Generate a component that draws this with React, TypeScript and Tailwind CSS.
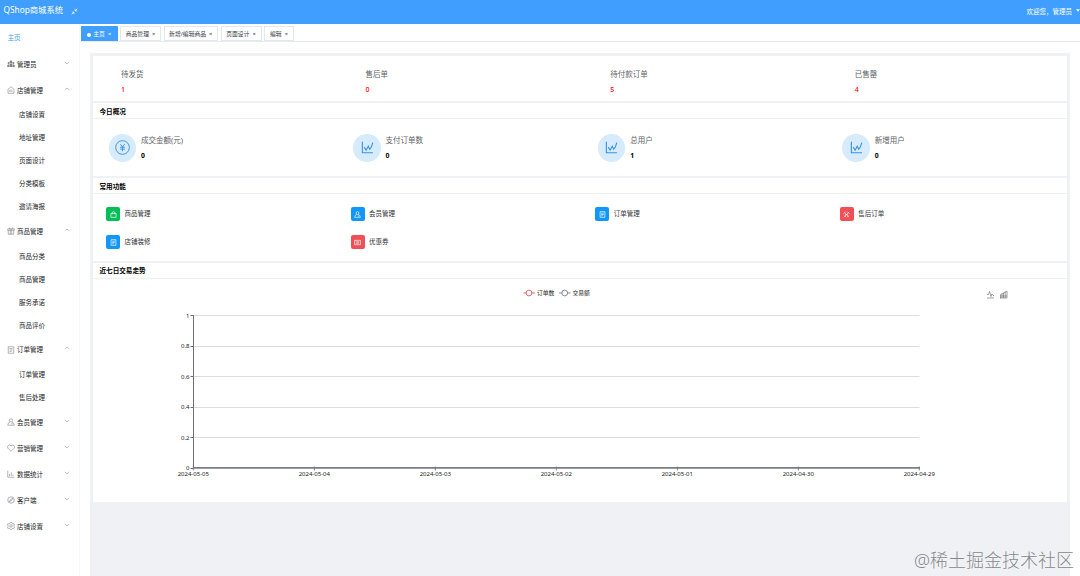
import React from 'react';

type IconName =
  | 'users' | 'shop' | 'gift' | 'doc' | 'user' | 'heart' | 'chart' | 'compass' | 'gear'
  | 'bag' | 'tools' | 'ticket' | 'yen' | 'trend';

const shapes: Record<IconName, React.ReactNode> = {
  users: (
    <g fill="currentColor" stroke="none">
      <circle cx="8" cy="4" r="2.8" />
      <circle cx="3.2" cy="6" r="2" />
      <circle cx="12.8" cy="6" r="2" />
      <path d="M5 14V9.5Q5 7 8 7t3 2.5V14zM.5 14v-3q0-2.500 3.700-2V14zM15.500 14v-3q0-2.500-3.700-2V14z" />
    </g>
  ),
  shop: <path d="M2 6.5 8 1.5l6 5V14.500H2zM5.500 11.500v-3.500M8 11.500V6.500M10.500 11.500v-2.500" />,
  gift: <path d="M1.500 3.500h13v3h-13zM2.500 6.500v8h11v-8M6.500 3.500v11M9.500 3.500v11M5 1v2.500M11 1v2.500" />,
  doc: <path d="M2.500 1.500h11v13h-11zM5 5h6M5 8h6M5 11h4" />,
  user: <path d="M8 1.500a3.300 3.300 0 1 1 0 6.600a3.300 3.300 0 1 1 0-6.600M1.500 14.500q0-5 4.500-6.500M10 8q4.500 1.500 4.500 6.500H1.500M8.500 11.500h3" />,
  heart: <path d="M8 14.500 2 8.500Q0 5.500 2.200 3T8 3.800Q11 .8 13.800 3T14 8.500z" />,
  chart: <path d="M1.500 1.500v13h13M5 12V8M8.500 12V5M12 12V9" />,
  compass: <path d="M8 1.500a6.500 6.500 0 1 1 0 13a6.500 6.500 0 1 1 0-13M11.500 4.500 9 9l-4.500 2.500L7 7z" />,
  gear: (
    <path d="M6.500 1h3l.6 2 2 .9 2-.6 1.200 2.600-1.500 1.500v1.400l1.500 1.500-1.200 2.600-2-.6-2 .9-.6 2h-3l-.6-2-2-.9-2 .6L.7 10.300l1.500-1.500V7.400L.7 5.900l1.200-2.600 2 .6 2-.9zM8 5.500a2.500 2.500 0 1 1 0 5a2.500 2.500 0 1 1 0-5" />
  ),
  bag: <path d="M2 5.500h12v9H2zM5 7.500V4q0-2.500 3-2.500T11 4v3.500" />,
  tools: <path d="M3 3 13.500 14M13 3 2.500 14M1 6.500 6 1.500M10 1.500l5 5M3 10.500l3.500 3.500M13 10.500 9.500 14M5 8.300h6" />,
  ticket: <path d="M1 3h14v10H1zM4 6.500h8M4 9.500h8" />,
  yen: (
    <g>
      <circle cx="8" cy="8" r="7.300" />
      <path d="M5.800 4.500 8 7.500l2.200-3M8 7.500V12M5.500 7.700h5M5.500 9.700h5" />
    </g>
  ),
  trend: <path d="M1.700 1v13.500h13M4 7.500l2.300 3.800L9 6.500l1.700 3.500 2-2.500L14.500 2" />,
};

function Icon({ name, className, width = 1 }: { name: IconName; className: string; width?: number }) {
  return (
    <svg viewBox="0 0 16 16" className={className} fill="none" stroke="currentColor" strokeWidth={width}>
      {shapes[name]}
    </svg>
  );
}

type MenuEntry = { label: string; icon: IconName; children?: string[] };

const menu: MenuEntry[] = [
  { label: '管理员', icon: 'users' },
  { label: '店铺管理', icon: 'shop', children: ['店铺设置', '地址管理', '页面设计', '分类模板', '邀请海报'] },
  { label: '商品管理', icon: 'gift', children: ['商品分类', '商品管理', '服务承诺', '商品评价'] },
  { label: '订单管理', icon: 'doc', children: ['订单管理', '售后处理'] },
  { label: '会员管理', icon: 'user' },
  { label: '营销管理', icon: 'heart' },
  { label: '数据统计', icon: 'chart' },
  { label: '客户端', icon: 'compass' },
  { label: '店铺设置', icon: 'gear' },
];

function Sidebar() {
  return (
    <nav className="w-[80px] shrink-0 border-r border-[#f8f8fa] pt-[1.500px] text-[6.500px] text-[#232529]">
      <div className="flex h-[26px] items-center pl-[7.500px] text-[#409eff]">主页</div>
      {menu.map((m) => (
        <div key={m.label + m.icon}>
          <div className="flex h-[26px] items-center pl-[7px] pr-[9.500px]">
            <Icon name={m.icon} className="mr-[2px] mb-px size-[8px] text-[#80838a]" width={1.200} />
            <span className="flex-1 pt-[.8px]">{m.label}</span>
            <svg viewBox="0 0 6 4" className="mb-[4px] h-[4px] w-[6px]" fill="none" stroke="#909399" strokeWidth=".6">
              <path d={m.children ? 'M.8 2.800 3 1l2.200 1.800' : 'M.8 1 3 2.800 5.200 1'} />
            </svg>
          </div>
          {m.children?.map((c) => (
            <div key={c} className="flex h-[23.100px] items-center pt-[.5px] pl-[19px]">{c}</div>
          ))}
        </div>
      ))}
    </nav>
  );
}

function TabItem({ label, size }: { label: string; size: string }) {
  return (
    <div className={'flex h-[15.500px] shrink-0 items-center justify-center gap-[2px] border border-[#e2e8f0] bg-white pt-[2.500px] text-[#363c45] ' + size}>
      <span>{label}</span>
      <span className="pl-px">×</span>
    </div>
  );
}

function Tabs() {
  return (
    <div className="flex h-[18px] shrink-0 items-end gap-[2.500px] border-b border-[#e8eaee] pl-[1px] text-[5.800px]">
      <div className="flex h-[15.500px] w-[36.500px] shrink-0 items-center justify-center gap-[2px] bg-[#409eff] pt-[2.500px] text-white">
        <i className="size-[4px] rounded-full bg-white" />
        <span>主页</span>
        <span className="pl-px">×</span>
      </div>
      <TabItem label="商品管理" size="w-[41px]" />
      <TabItem label="新增/编辑商品" size="w-[54.500px]" />
      <TabItem label="页面设计" size="w-[41px]" />
      <TabItem label="编辑" size="w-[30px]" />
    </div>
  );
}

function CardTitle({ children }: { children: React.ReactNode }) {
  return (
    <h2 className="flex h-[16px] items-center border-b border-[#eef0f3] pt-[3.500px] pl-[6.500px] text-[6.600px] font-bold text-black">
      {children}
    </h2>
  );
}

const orders = [['待发货', '1'], ['售后单', '0'], ['待付款订单', '5'], ['已售罄', '4']];
const today: [string, string, IconName][] = [
  ['成交金额(元)', '0', 'yen'],
  ['支付订单数', '0', 'trend'],
  ['总用户', '1', 'trend'],
  ['新增用户', '0', 'trend'],
];
const tools: { label: string; icon: IconName; color: string }[] = [
  { label: '商品管理', icon: 'bag', color: 'bg-[#07bd58]' },
  { label: '会员管理', icon: 'user', color: 'bg-[#1296f8]' },
  { label: '订单管理', icon: 'doc', color: 'bg-[#1296f8]' },
  { label: '售后订单', icon: 'tools', color: 'bg-[#f04f55]' },
  { label: '店铺装修', icon: 'doc', color: 'bg-[#1296f8]' },
  { label: '优惠券', icon: 'ticket', color: 'bg-[#f04f55]' },
];
const dates = ['2024-05-05', '2024-05-04', '2024-05-03', '2024-05-02', '2024-05-01', '2024-04-30', '2024-04-29'];
const levels = ['1', '0.8', '0.6', '0.4', '0.2', '0'];

function TrendChart() {
  return (
    <svg width="974" height="223" viewBox="93 279 974 223" className="block" fontSize="6">
      <g fill="#fff" strokeWidth=".7">
        <path d="M523.500 293h11.500" stroke="#c23531" />
        <circle cx="529" cy="293" r="2.900" stroke="#c23531" />
        <path d="M559 293h11.500" stroke="#4f5b66" />
        <circle cx="564.700" cy="293" r="2.900" stroke="#4f5b66" />
      </g>
      <g fill="#222" fontSize="5.800">
        <text x="537" y="295">订单数</text>
        <text x="572.500" y="295">交易额</text>
      </g>
      <g fill="none" stroke="#777" strokeWidth=".7">
        <path d="M987 298h7M987 294.500h1.500l1-3 1.500 5 1-2.500 1 1.500h1" />
        <path d="M1000 298h7v-7l-6.500 3.500V298zM1002 294v4M1003.500 293v5M1005.200 292v6M1000.500 296h6.500" />
      </g>
      {levels.map((v, i) => {
        const y = 315.5 + i * 30.5;
        return (
          <g key={v}>
            {i < 5 && <path d={`M193 ${Math.floor(y) + 0.5}H919.500`} stroke="#dcdfe2" />}
            <path d={`M190.500 ${Math.floor(y) + 0.5}h3`} stroke="#6e7079" />
            <text x="189.500" y={y + 2} textAnchor="end" fill="#222">{v}</text>
          </g>
        );
      })}
      <path d="M193.500 315v153" stroke="#6e7079" />
      <path d="M193 467.900h727" stroke="#7b7e87" strokeWidth="1.700" />
      {dates.map((d, i) => (
        <g key={d}>
          <path d={`M${193.3 + i * 121} 466.500v4`} stroke="#6e7079" strokeWidth=".8" />
          <text x={193.3 + i * 121} y="476.400" textAnchor="middle" fill="#222">{d}</text>
        </g>
      ))}
    </svg>
  );
}

export default function App() {
  return (
    <div className="relative flex h-[576px] w-[1080px] flex-col overflow-hidden bg-white font-['Noto_Sans','Noto_Sans_CJK_SC',sans-serif] leading-none whitespace-nowrap">
      <header className="flex h-[24px] shrink-0 items-center bg-[#409eff] pb-[3px] pl-[3.500px] text-white">
        <span className="text-[8.300px]">QShop商城系统</span>
        <svg viewBox="0 0 8 8" className="mt-px ml-[8px] size-[7px]" fill="none" stroke="currentColor" strokeWidth=".9">
          <path d="M4.700 1v2.300H7M4.700 3.300 7.200.8M1 4.700h2.300V7M3.300 4.700.8 7.200" />
        </svg>
        <span className="ml-auto pt-[2.500px] text-[6.500px]">欢迎您，管理员</span>
        <svg viewBox="0 0 5 3" className="ml-[4px] h-[3px] w-[4px]"><path d="M0 0h5L2.500 3z" fill="#fff" /></svg>
      </header>
      <div className="flex min-h-0 flex-1">
        <Sidebar />
        <div className="flex min-w-0 flex-1 flex-col">
          <Tabs />
          <main className="mt-[11px] mr-[10px] ml-[10px] flex flex-1 flex-col bg-[#eff1f5] px-[3px] pt-[3px]">
            <section className="mb-[2px] grid h-[45px] grid-cols-[repeat(4,244.600px)] overflow-hidden bg-white pt-[14px]">
              {orders.map(([label, value]) => (
                <div key={label} className="pl-[28px]">
                  <div className="text-[7.500px] leading-[8px] text-[#606266]">{label}</div>
                  <div className="mt-[8px] text-[7px] font-medium leading-[8px] text-[#f00]">{value}</div>
                </div>
              ))}
            </section>
            <section className="mb-[2px] h-[73px] overflow-hidden bg-white">
              <CardTitle>今日概况</CardTitle>
              <div className="grid grid-cols-[repeat(4,244.600px)] pt-[14px]">
                {today.map(([label, value, icon]) => (
                  <div key={label} className="flex pl-[15.700px]">
                    <div className="mt-px flex size-[27.500px] items-center justify-center rounded-full bg-[#d6ebfb] text-[#3a93e0]">
                      <Icon name={icon} className={icon === 'yen' ? 'size-[15px]' : 'size-[13px]'} width={icon === 'yen' ? 1 : 1.400} />
                    </div>
                    <div className="ml-[4.800px] pt-[3px]">
                      <div className="text-[7.500px] leading-[8px] text-[#606266]">{label}</div>
                      <div className="mt-[8px] text-[6.800px] font-bold leading-[8px] text-black">{value}</div>
                    </div>
                  </div>
                ))}
              </div>
            </section>
            <section className="mb-[1.500px] h-[83px] overflow-hidden bg-white">
              <CardTitle>常用功能</CardTitle>
              <div className="grid grid-cols-[repeat(4,244.600px)] gap-y-[14px] pt-[13px]">
                {tools.map((t) => (
                  <div key={t.label} className="flex items-center pl-[13px]">
                    <div className={'flex size-[14px] items-center justify-center rounded-[2px] text-white ' + t.color}>
                      <Icon name={t.icon} className="size-[7px]" width={1.500} />
                    </div>
                    <span className="ml-[4.500px] text-[6.500px] text-[#303236]">{t.label}</span>
                  </div>
                ))}
              </div>
            </section>
            <section className="h-[239.500px] overflow-hidden bg-white">
              <CardTitle>近七日交易走势</CardTitle>
              <TrendChart />
            </section>
          </main>
        </div>
      </div>
      <div className="absolute top-[550px] right-[6px] text-[18px] font-light leading-[20px] text-[#85878b] [text-shadow:0_0_1px_#fff]">
        @稀土掘金技术社区
      </div>
    </div>
  );
}
